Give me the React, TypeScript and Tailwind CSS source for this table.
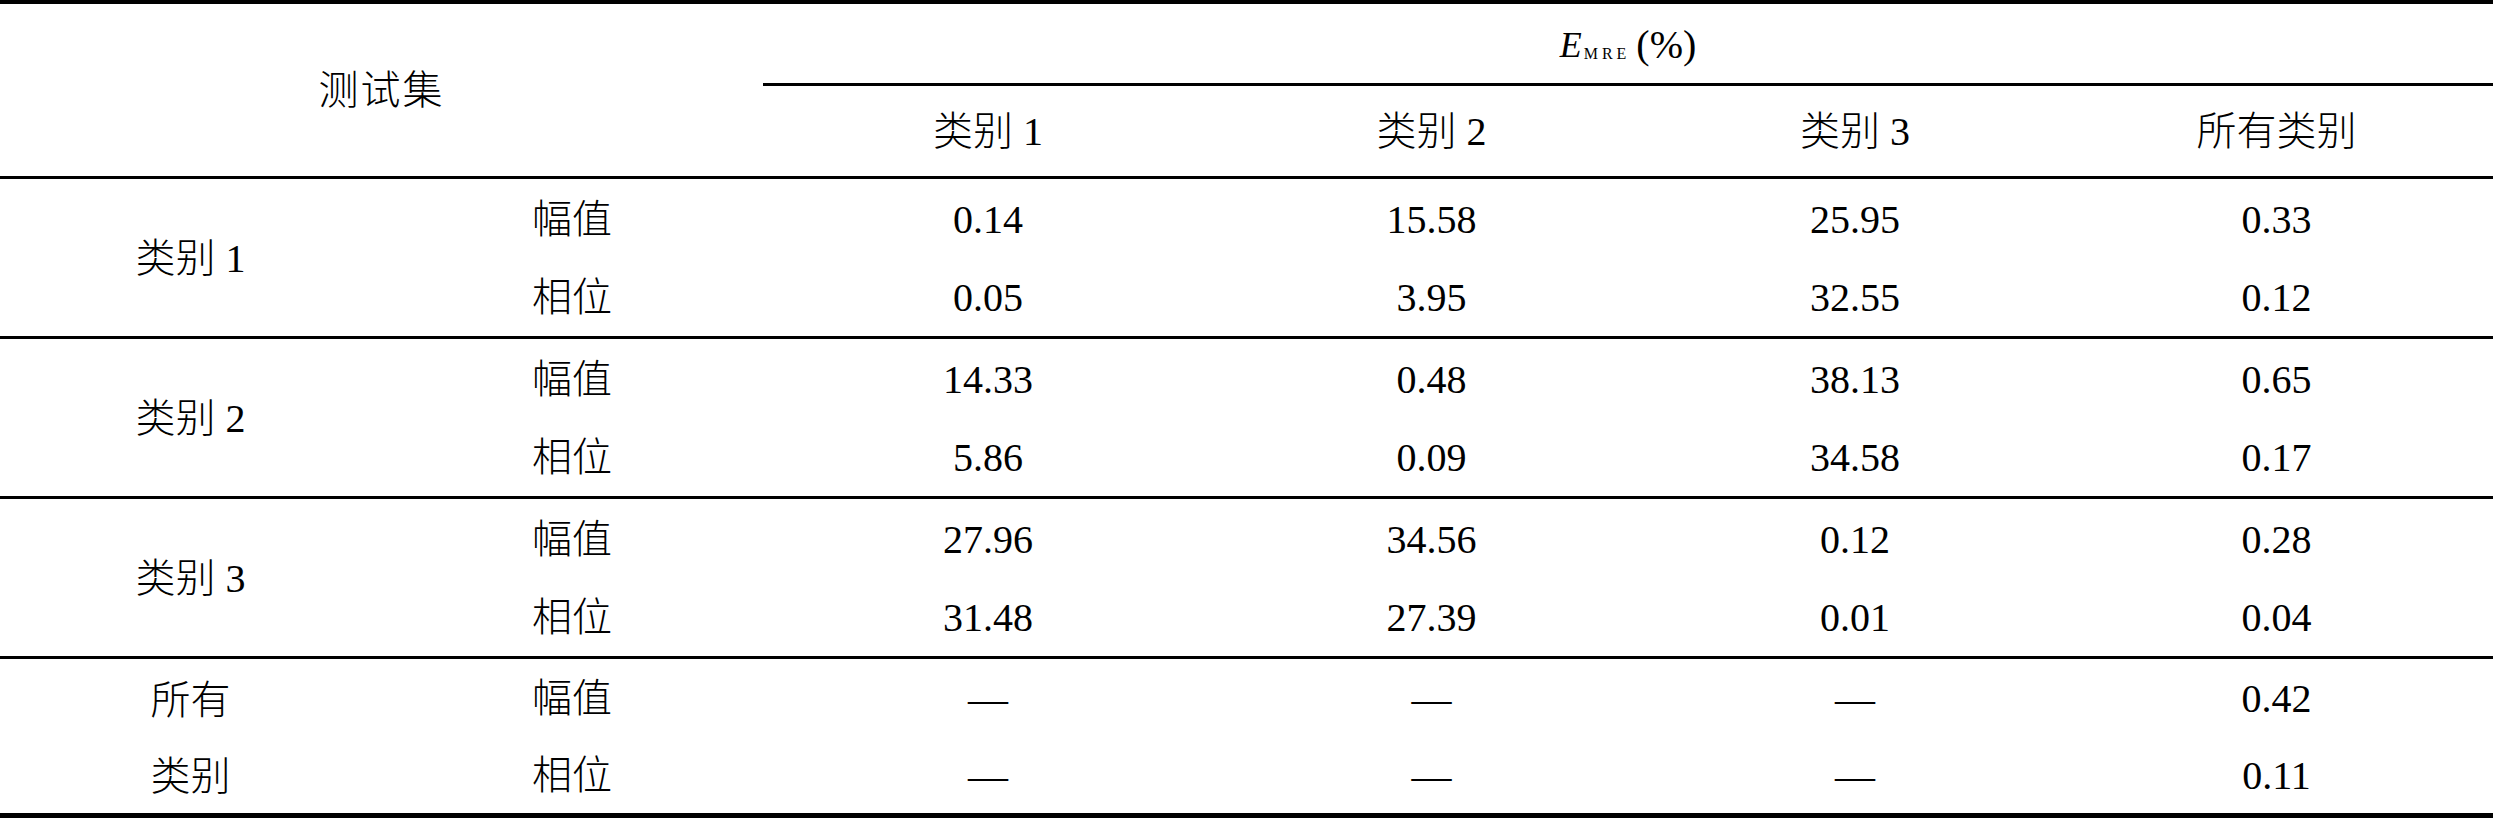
import React from 'react'

type GroupType = {
  label: React.ReactNode
  amp: string[]
  phase: string[]
  last?: boolean
}

const groups: GroupType[] = [
  { label: '类别 1', amp: ['0.14', '15.58', '25.95', '0.33'], phase: ['0.05', '3.95', '32.55', '0.12'] },
  { label: '类别 2', amp: ['14.33', '0.48', '38.13', '0.65'], phase: ['5.86', '0.09', '34.58', '0.17'] },
  { label: '类别 3', amp: ['27.96', '34.56', '0.12', '0.28'], phase: ['31.48', '27.39', '0.01', '0.04'] },
  {
    label: (
      <div className="flex flex-col items-center h-full">
        <div className="flex-1 flex items-center justify-center pt-[3px]">所有</div>
        <div className="flex-1 flex items-center justify-center pt-[3px]">类别</div>
      </div>
    ),
    amp: ['—', '—', '—', '0.42'],
    phase: ['—', '—', '—', '0.11'],
    last: true,
  },
]

// widths of the 4 value columns
const colW = ['w-[450px]', 'w-[437px]', 'w-[410px]', 'w-[433px]']

const ValueRow = ({ name, values }: { name: string; values: string[] }) => {
  return (
    <div className="flex-1 flex pt-[3px]">
      <div className="w-[382px] flex items-center justify-center">{name}</div>
      {values.map((v, i) => (
        <div key={i} className={`${colW[i]} flex items-center justify-center`}>
          {v}
        </div>
      ))}
    </div>
  )
}

const App = () => {
  return (
    <div
      className="w-[2493px] h-[824px] bg-white text-black text-[40px] leading-none font-light"
      style={{ fontFamily: '"Liberation Serif", "Noto Sans CJK SC", serif' }}
    >
      <div className="border-t-[4px] border-black">
        {/* header */}
        <div className="flex h-[172px]">
          <div className="w-[763px] flex items-center justify-center tracking-[2px] pt-[2px]">测试集</div>
          <div className="w-[1730px] flex flex-col">
            <div className="h-[79px] flex items-center justify-center pt-[2px]">
              <span className="italic text-[36px]">E</span>
              <span className="text-[16px] tracking-[4px] self-end mb-[21px] ml-[2px]">MRE</span>
              <span className="ml-[6px]">(%)</span>
            </div>
            <div className="h-[3px] bg-black" />
            <div className="flex-1 flex pt-[2px]">
              <div className={`${colW[0]} flex items-center justify-center`}>类别 1</div>
              <div className={`${colW[1]} flex items-center justify-center`}>类别 2</div>
              <div className={`${colW[2]} flex items-center justify-center`}>类别 3</div>
              <div className={`${colW[3]} flex items-center justify-center`}>所有类别</div>
            </div>
          </div>
        </div>

        {/* body groups */}
        {groups.map((g, gi) => (
          <div
            key={gi}
            className={`border-t-[3px] border-black flex ${g.last ? 'h-[162px] border-b-[5px]' : 'h-[160px]'}`}
          >
            <div className="w-[381px] flex items-center justify-center pt-[3px]">{g.label}</div>
            <div className="flex-1 flex flex-col">
              <ValueRow name="幅值" values={g.amp} />
              <ValueRow name="相位" values={g.phase} />
            </div>
          </div>
        ))}
      </div>
    </div>
  )
}

export default App
